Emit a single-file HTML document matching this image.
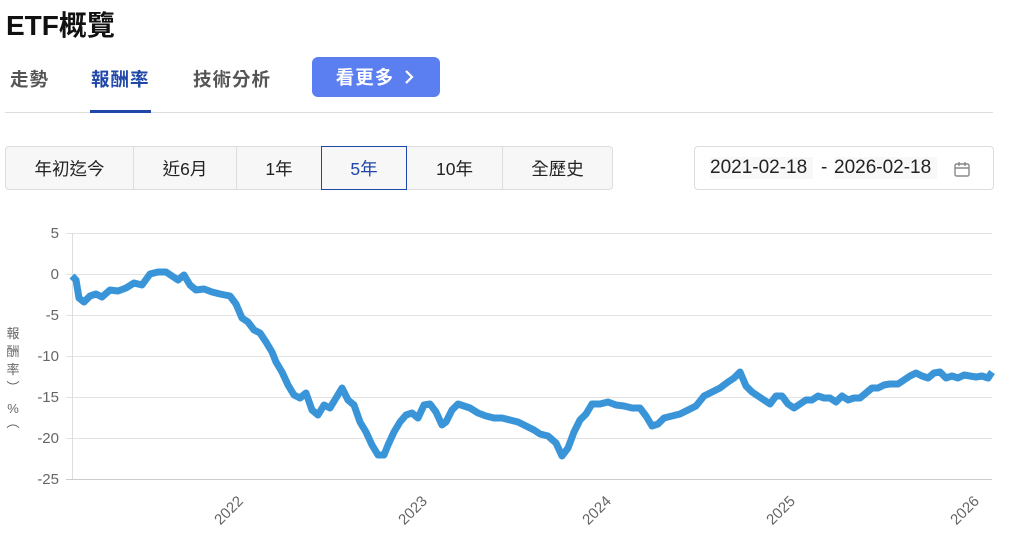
<!DOCTYPE html>
<html><head><meta charset="utf-8"><style>
*{margin:0;padding:0;box-sizing:border-box}
body{width:1016px;height:534px;background:#fff;font-family:"Liberation Sans","Noto Sans CJK TC",sans-serif;position:relative;overflow:hidden;color:#222}
.abs{position:absolute}
h1{position:absolute;left:6px;top:4px;font-size:28px;font-weight:700;color:#111}
.tab{position:absolute;top:66px;font-size:18.5px;font-weight:700;color:#555;letter-spacing:1px}
.seg{position:absolute;top:146px;height:44px;border:1px solid #ddd;background:#f7f7f7;font-size:17.5px;color:#222;display:flex;align-items:center;justify-content:center}
</style></head><body>
<h1>ETF概覽</h1>
<div class="tab" style="left:10px">走勢</div>
<div class="tab" style="left:91px;color:#1f47a8">報酬率</div>
<div class="tab" style="left:193px">技術分析</div>
<div class="abs" style="left:312px;top:57px;width:128px;height:40px;background:#5b7ff0;border-radius:6px;color:#fff;font-size:18.5px;font-weight:700;display:flex;align-items:center;justify-content:center;letter-spacing:1px">看更多 <svg width="14" height="16" viewBox="0 0 14 16" style="margin-left:8px"><path d="M4 2 L10 8 L4 14" stroke="#fff" stroke-width="2.2" fill="none"/></svg></div>
<div class="abs" style="left:5px;top:112px;width:988px;height:1px;background:#ddd"></div>
<div class="abs" style="left:90px;top:110px;width:61px;height:3px;background:#1f47a8"></div>
<div class="seg" style="left:5px;width:129px;border-radius:4px 0 0 4px">年初迄今</div>
<div class="seg" style="left:133px;width:104px">近6月</div>
<div class="seg" style="left:236px;width:86px">1年</div>
<div class="seg" style="left:502px;width:111px;border-radius:0 4px 4px 0">全歷史</div>
<div class="seg" style="left:406px;width:97px">10年</div>
<div class="seg" style="left:321px;width:86px;border-color:#1f47a8;color:#1f47a8">5年</div>
<div class="abs" style="left:694px;top:146px;width:300px;height:44px;border:1px solid #ddd;border-radius:4px;font-size:19px;color:#222">
<span class="abs" style="left:15px;top:10px;background:#f8f8f8;padding:0 6px 0 0">2021-02-18</span>
<span class="abs" style="left:126px;top:10px">- </span>
<span class="abs" style="left:139px;top:10px;background:#f8f8f8;padding:0 6px 0 0">2026-02-18</span>
<svg class="abs" style="left:258px;top:13px" width="18" height="18" viewBox="0 0 18 18"><rect x="2" y="4" width="14" height="12" rx="1.5" fill="none" stroke="#888" stroke-width="1.4"/><path d="M2 8 H16 M6 2 V6 M12 2 V6" stroke="#888" stroke-width="1.4"/></svg>
</div>
<svg class="abs" style="left:0;top:0" width="1016" height="534">
<g stroke="#e3e3e3" stroke-width="1">
<line x1="66" y1="233.5" x2="992" y2="233.5"/><line x1="66" y1="274.5" x2="992" y2="274.5"/><line x1="66" y1="315.5" x2="992" y2="315.5"/><line x1="66" y1="356.5" x2="992" y2="356.5"/><line x1="66" y1="397.5" x2="992" y2="397.5"/><line x1="66" y1="438.5" x2="992" y2="438.5"/>
</g>
<line x1="72.5" y1="233" x2="72.5" y2="479" stroke="#ddd"/>
<line x1="66" y1="479.5" x2="992" y2="479.5" stroke="#ccc"/>
<g font-size="15" fill="#666" text-anchor="end" font-family="Liberation Sans,sans-serif">
<text x="59" y="238">5</text><text x="59" y="279">0</text><text x="59" y="320">-5</text><text x="59" y="361">-10</text><text x="59" y="402">-15</text><text x="59" y="443">-20</text><text x="59" y="484">-25</text>
</g>
<g font-size="13" fill="#666" font-family="Liberation Sans,Noto Sans CJK TC,sans-serif" text-anchor="middle">
<text x="13" y="338">報</text><text x="13" y="356">酬</text><text x="13" y="374">率</text><text x="13" y="392">︶</text><text x="13" y="413">%</text><text x="13" y="427">︵</text>
</g>
<g font-size="15" fill="#666" font-family="Liberation Sans,sans-serif" text-anchor="end">
<text transform="translate(244,502) rotate(-45)">2022</text>
<text transform="translate(428,502) rotate(-45)">2023</text>
<text transform="translate(612,502) rotate(-45)">2024</text>
<text transform="translate(796,502) rotate(-45)">2025</text>
<text transform="translate(980,502) rotate(-45)">2026</text>
</g>
<polyline fill="none" stroke="#3a95d8" stroke-width="7" stroke-linejoin="round" points="72,276 76,280 79,298 84,302 90,296 96,294 102,297 110,290 118,291 126,288 134,283 142,285 150,274 158,272 166,272 172,276 178,280 184,275 190,285 196,290 204,289 212,292 220,294 230,296 236,304 242,318 248,322 254,330 260,333 266,342 272,352 276,362 282,372 288,385 294,395 300,398 306,393 312,410 318,415 324,405 330,408 336,398 342,388 348,400 354,405 360,422 366,432 372,445 378,455 384,455 388,445 394,432 400,422 406,415 412,413 418,418 424,405 430,404 436,412 442,425 446,422 452,410 458,404 464,406 470,408 478,413 486,416 494,418 502,418 510,420 518,422 526,426 534,430 540,434 548,436 556,443 562,456 568,448 574,432 580,420 586,414 592,404 600,404 608,402 616,405 624,406 632,408 640,408 646,416 652,426 658,424 664,418 672,416 680,414 688,410 696,406 704,396 712,392 720,388 728,382 734,378 740,372 746,386 752,392 758,396 764,400 770,404 776,396 782,396 788,404 794,408 800,404 806,400 812,400 818,396 824,398 830,398 836,402 842,396 848,400 854,398 860,398 866,393 872,388 878,388 884,385 890,384 898,384 904,380 910,376 916,373 922,376 928,378 934,373 940,372 946,378 952,376 958,378 964,375 970,376 976,377 982,376 988,378 992,372"/>
</svg>
</body></html>
